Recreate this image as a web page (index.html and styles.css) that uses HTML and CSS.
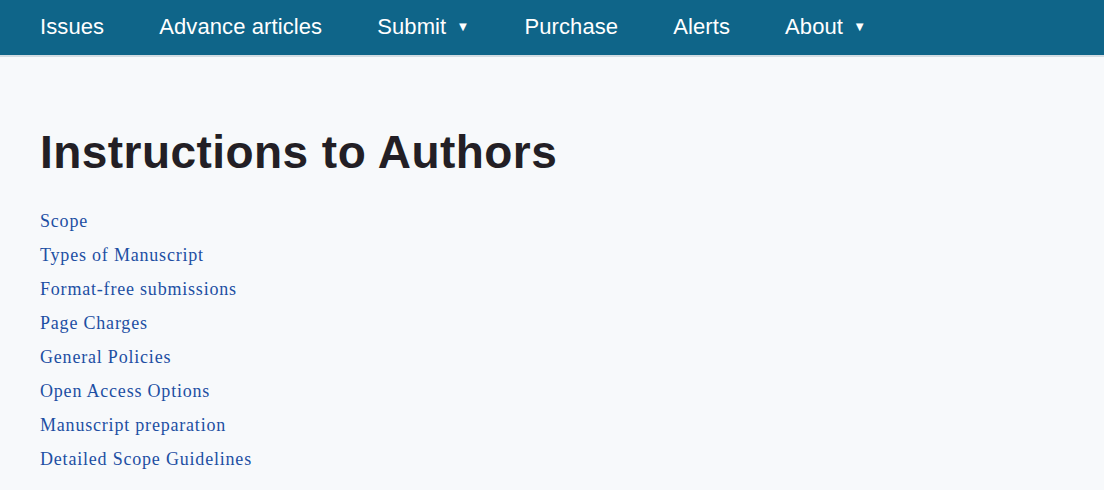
FILE: index.html
```html
<!DOCTYPE html>
<html lang="en">
<head>
<meta charset="utf-8">
<title>Instructions to Authors</title>
<link rel="stylesheet" href="styles.css">
</head>
<body>
<nav class="topnav">
  <ul class="nav-list">
    <li class="nav-item">Issues</li>
    <li class="nav-item">Advance articles</li>
    <li class="nav-item">Submit <span class="caret">&#9660;</span></li>
    <li class="nav-item">Purchase</li>
    <li class="nav-item">Alerts</li>
    <li class="nav-item">About <span class="caret">&#9660;</span></li>
  </ul>
</nav>
<main class="content">
  <h1 class="title">Instructions to Authors</h1>
  <ul class="toc">
    <li><a href="#">Scope</a></li>
    <li><a href="#">Types of Manuscript</a></li>
    <li><a href="#">Format-free submissions</a></li>
    <li><a href="#">Page Charges</a></li>
    <li><a href="#">General Policies</a></li>
    <li><a href="#">Open Access Options</a></li>
    <li><a href="#">Manuscript preparation</a></li>
    <li><a href="#">Detailed Scope Guidelines</a></li>
  </ul>
</main>
</body>
</html>
```

FILE: styles.css
```css
html, body {
  margin: 0;
  padding: 0;
}
body {
  background: #f7f9fb;
  font-family: "Liberation Sans", Arial, sans-serif;
  width: 1104px;
  height: 490px;
  overflow: hidden;
}
.topnav {
  background: #0f6589;
  height: 57px;
  border-bottom: 2px solid #d3dde3;
  box-sizing: border-box;
}
.nav-list {
  list-style: none;
  margin: 0;
  padding: 14px 0 0 40px;
  display: flex;
  gap: 55px;
  align-items: flex-start;
}
.nav-item {
  color: #ffffff;
  font-size: 22px;
  line-height: 26px;
  letter-spacing: 0.1px;
}
.caret {
  font-size: 13px;
  margin-left: 4px;
  vertical-align: 3px;
}
.content {
  padding: 0 40px;
}
.title {
  margin: 69px 0 0;
  font-family: "Liberation Sans", Arial, sans-serif;
  font-weight: bold;
  font-size: 46px;
  line-height: 52px;
  color: #231f25;
  letter-spacing: 0.45px;
}
.toc {
  list-style: none;
  margin: 26px 0 0;
  padding: 0;
}
.toc li {
  font-family: "Liberation Serif", "Times New Roman", serif;
  font-size: 18px;
  line-height: 34px;
  letter-spacing: 0.8px;
}
.toc a {
  color: #1d4fa3;
  text-decoration: none;
}
```
